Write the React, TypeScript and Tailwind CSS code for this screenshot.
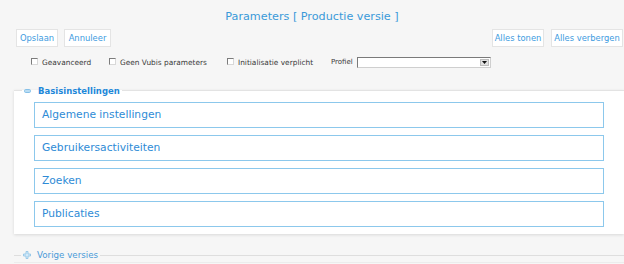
import React from "react";

function Checkbox() {
  return (
    <span className="inline-block w-[7px] h-[7px] bg-white border border-t-[#7c7c7c] border-l-[#7c7c7c] border-b-[#d8d8d8] border-r-[#d8d8d8] mt-[-3px]" />
  );
}

function CheckItem({ label, w }: { label: string; w: string }) {
  return (
    <div className={`flex items-center gap-[4px] ${w}`}>
      <Checkbox />
      <span className="text-[7.4px] leading-[11px] text-[#3a3a3a]">{label}</span>
    </div>
  );
}

function Btn({ label, w }: { label: string; w: string }) {
  return (
    <div className={`${w} h-[18px] flex items-center justify-center bg-white border border-[#e4e4e4] text-[8.4px] text-[#3d9be0]`}>
      {label}
    </div>
  );
}

export default function App() {
  const items = ["Algemene instellingen", "Gebruikersactiviteiten", "Zoeken", "Publicaties"];
  return (
    <div className="w-[624px] h-[264px] overflow-hidden bg-[#f6f6f6] font-['DejaVu_Sans',sans-serif]">
      <div className="pt-[10px] text-center text-[11.2px] leading-[14px] text-[#3a9ad9]">
        Parameters [ Productie versie ]
      </div>

      <div className="mt-[5px] flex justify-between pl-[16px] pr-[1px]">
        <div className="flex gap-[6px]">
          <Btn label="Opslaan" w="w-[42px]" />
          <Btn label="Annuleer" w="w-[47px]" />
        </div>
        <div className="flex gap-[7px]">
          <Btn label="Alles tonen" w="w-[52px]" />
          <Btn label="Alles verbergen" w="w-[72px]" />
        </div>
      </div>

      <div className="mt-[10px] h-[11px] flex items-center pl-[31px]">
        <CheckItem label="Geavanceerd" w="w-[78px]" />
        <CheckItem label="Geen Vubis parameters" w="w-[118px]" />
        <CheckItem label="Initialisatie verplicht" w="w-[104px]" />
        <div className="flex items-center gap-[4px]">
          <span className="text-[7px] leading-[11px] text-[#3a3a3a]">Profiel</span>
          <div className="w-[134px] h-[11px] bg-white border border-t-[#7a7a7a] border-l-[#7a7a7a] border-b-[#cfcfcf] border-r-[#cfcfcf] flex justify-end items-center pr-[1px]">
            <div className="w-[9px] h-[7px] bg-[#e2e2e2] border border-[#bdbdbd] flex items-center justify-center">
              <svg width="5" height="3" viewBox="0 0 5 3">
                <polygon points="0,0 5,0 2.5,3" fill="#111" />
              </svg>
            </div>
          </div>
        </div>
      </div>

      <fieldset className="ml-[14px] w-[610px] mt-[16px] bg-white border-t border-[#e3e3e3] shadow-[0_1px_3px_rgba(0,0,0,0.12)]">
        <legend className="ml-[8px] px-[2px] text-[8.5px] leading-[12px] font-bold text-[#1e88d9]">
          <span className="inline-flex items-center gap-[7px]">
            <svg width="7" height="4" viewBox="0 0 7 4">
              <rect x="0.5" y="0.5" width="6" height="3" rx="1.2" fill="#b9dcf3" stroke="#86c0e8" strokeWidth="1" />
            </svg>
            Basisinstellingen
          </span>
        </legend>
        <div className="px-[20px] pt-[5px] pb-[7px] flex flex-col gap-[7px]">
          {items.map((t) => (
            <div
              key={t}
              className="h-[26px] border border-[#8cc8ec] bg-white flex items-center pl-[7px] text-[10.7px] text-[#2e8bd6]"
            >
              {t}
            </div>
          ))}
        </div>
      </fieldset>

      <fieldset className="ml-[14px] w-[610px] mt-[15px] border-t border-b border-t-[#dedede] border-b-[#ececec]">
        <legend className="ml-[7px] px-[2px] text-[8.7px] leading-[12px] text-[#4a9ad8]">
          <span className="inline-flex items-center gap-[6px]">
            <svg width="8" height="8" viewBox="0 0 8 8">
              <path d="M3 0.5 H5 V3 H7.5 V5 H5 V7.5 H3 V5 H0.5 V3 H3 Z" fill="#d3e9f8" stroke="#8cc2e6" strokeWidth="0.8" />
            </svg>
            Vorige versies
          </span>
        </legend>
      </fieldset>
    </div>
  );
}
